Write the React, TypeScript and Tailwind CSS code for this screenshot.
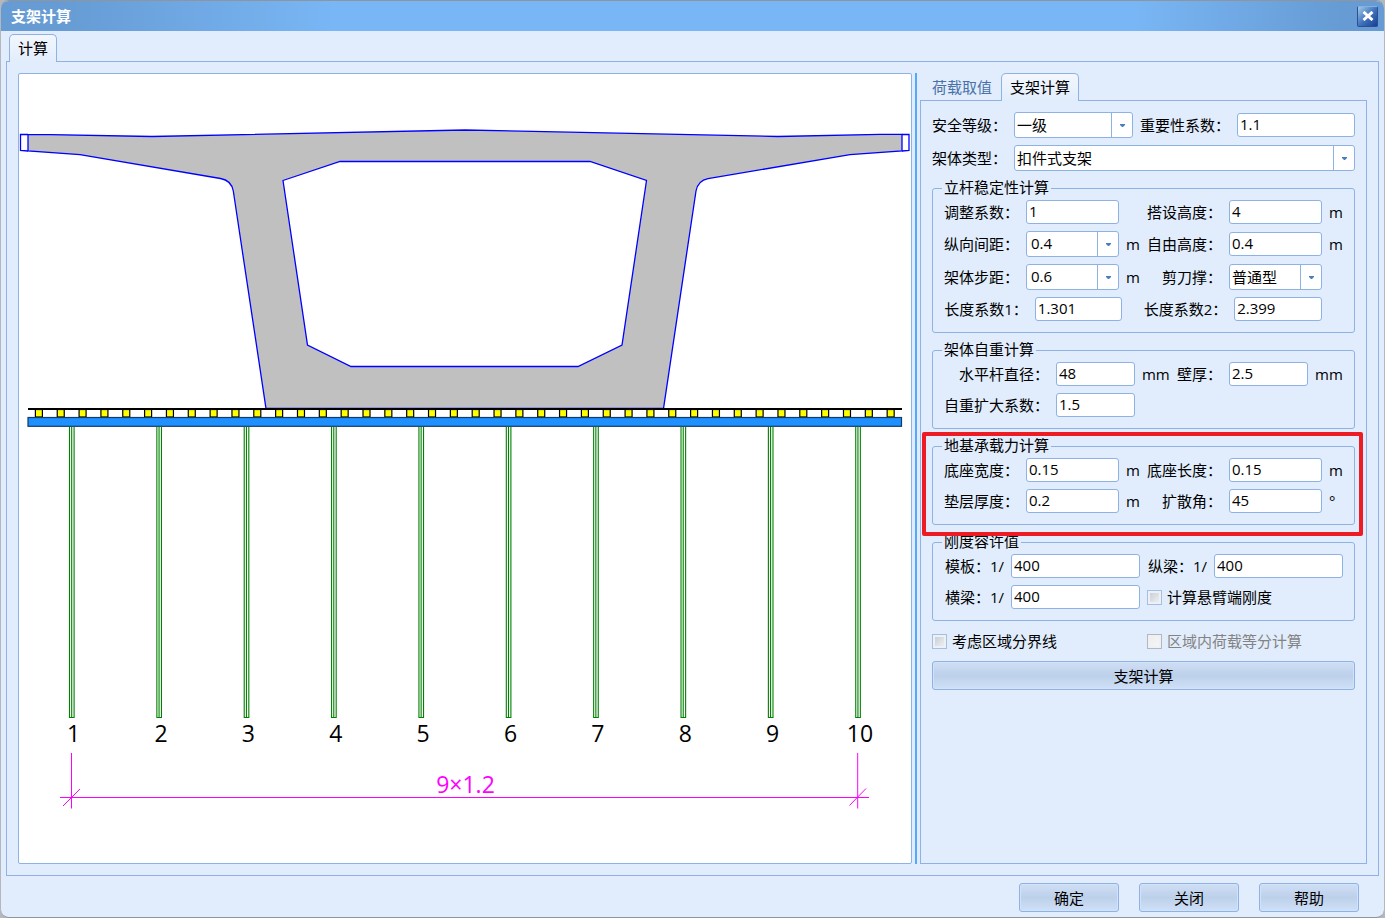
import React, { useId, useState } from "react";

const POSTS = Array.from({ length: 10 }, (_, i) => 71.7 + i * 87.36);
const BLOCKS = Array.from({ length: 40 }, (_, i) => 38.9 + i * 21.84);

function SectionDrawing() {
  return (
    <svg viewBox="19 74 892 789" className="block h-full w-full" role="img" aria-label="支架计算简图">
      <path
        d="M28 134.6 L50 134.6 L152 136.5 L465 130 L778 136.5 L880 134.4 L902 134.4 L902 151 L850 154.7 L708 178.6 Q698 180.5 696 191 L663.5 408.5 L266 408.5 L233.3 191 Q231.5 180.5 220.5 178.5 L80 154.7 L28 151 Z M283 180.5 L340 161.5 L590 161.5 L646.5 180.5 L622 345 L578 366.5 L351 366.5 L307.5 345 Z"
        fill="#c0c0c0"
        fillRule="evenodd"
        stroke="#0000ff"
        strokeWidth="1.3"
      />
      <path
        d="M28 134.5 L20.5 134.5 L20.5 150.5 L28 151 M902 134.5 L909 134.5 L909 150.5 L902 151"
        fill="none"
        stroke="#0000ff"
        strokeWidth="1.3"
      />
      {BLOCKS.map((x) => (
        <rect key={x} x={x - 3.5} y="409.5" width="7" height="7.5" fill="#ffff00" stroke="#000" strokeWidth="1.2" />
      ))}
      <path d="M28 409 H902" stroke="#000" strokeWidth="1.8" />
      <rect x="28" y="417.5" width="873.5" height="8.8" fill="#1e90ff" stroke="#123b66" strokeWidth="1.2" />
      {POSTS.map((x, i) => (
        <g key={x}>
          <path
            d={`M${x - 2.2} 427 V717.5 H${x + 2.4} V427 M${x} 427 V717`}
            fill="none"
            stroke="#008000"
            strokeWidth="1.1"
          />
          <text x={x + 2} y="742" fontSize="23" textAnchor="middle" fill="#000">
            {i + 1}
          </text>
        </g>
      ))}
      <path
        d="M60 797.5 H869 M71.5 753 V808.5 M857.7 753 V808.5 M63 806 L80 789 M849.5 805.5 L866 788.5"
        stroke="#ff00ff"
        strokeWidth="1"
      />
      <text x="465.5" y="793" fontSize="23" textAnchor="middle" fill="#ff00ff">
        9×1.2
      </text>
    </svg>
  );
}

type TextProps = { id: string; value: string };

function TextBox({ id, value }: TextProps) {
  return (
    <input
      id={id}
      type="text"
      defaultValue={value}
      className="h-6 w-full min-w-0 rounded-[3px] border border-[#8db2e3] bg-white pr-1 pb-[2px] pl-[2px] leading-5 outline-none"
    />
  );
}

type DropProps = { id: string; options: string[]; indent?: boolean };

function Drop({ id, options, indent }: DropProps) {
  return (
    <div className="relative h-[26px]">
      <select
        id={id}
        className={`h-full w-full appearance-none rounded-[3px] border border-[#8db2e3] bg-white pr-6 outline-none ${
          indent ? "pb-[2px] pl-1" : "pl-[2px]"
        }`}
      >
        {options.map((o) => (
          <option key={o}>{o}</option>
        ))}
      </select>
      <span className="pointer-events-none absolute inset-y-0 right-0 flex w-[22px] items-center justify-center border-l border-[#8db2e3]">
        <svg width="5" height="3" viewBox="0 0 5 3" aria-hidden="true">
          <path d="M0 0 H5 V1 L3 3 H2 L0 1 Z" fill="#4a7ebb" />
        </svg>
      </span>
    </div>
  );
}

function Label({ htmlFor, children }: { htmlFor: string; children: React.ReactNode }) {
  return (
    <label htmlFor={htmlFor} className="pr-[7px] text-right whitespace-nowrap">
      {children}
    </label>
  );
}

function Unit({ children }: { children?: React.ReactNode }) {
  return <span className="pl-[7px] whitespace-nowrap">{children}</span>;
}

function Check({ label, disabled }: { label: string; disabled?: boolean }) {
  const id = useId();
  return (
    <div className="flex items-center gap-[5px]">
      <input
        id={id}
        type="checkbox"
        disabled={disabled}
        className="size-[15px] shrink-0 appearance-none border border-[#a3bfe6] bg-linear-to-br from-[#c3c9d2] to-[#f4f5f7] shadow-[inset_0_0_0_2px_#edf0f4] checked:from-[#3f73b8] checked:to-[#6fa3e0] disabled:border-[#b4b7bb] disabled:from-[#ececec] disabled:to-[#f7f7f7]"
      />
      <label htmlFor={id} className={disabled ? "text-[#838383]" : ""}>
        {label}
      </label>
    </div>
  );
}

function Group({ title, children }: { title: string; children: React.ReactNode }) {
  return (
    <fieldset className="min-w-0 rounded-[3px] border border-[#8db2e3] px-[11px] pt-[2px] pb-[11px]">
      <legend className="-ml-[2px] px-[2px] pb-[2px] leading-[18px]">{title}</legend>
      <div className="flex flex-col gap-[7px]">{children}</div>
    </fieldset>
  );
}

const pairRow = "grid grid-cols-[82fr_93fr_28fr_82fr_93fr_21fr] items-center";
const factorRow = "grid grid-cols-[91fr_87fr_22fr_90fr_88fr_21fr] items-center";
const weightRow = "grid grid-cols-[112fr_79fr_42fr_52fr_79fr_35fr] items-center";
const ratioRow = "grid grid-cols-[67fr_129fr_7fr_67fr_129fr] items-center";
const pushButton =
  "rounded-[3px] border border-[#8db2e3] bg-linear-to-b from-[#cfdff5] via-[#bdd0ea] via-50% to-[#cfe1f7] shadow-[inset_0_0_0_1px_#d3e3f7] hover:brightness-105";

function SupportForm() {
  return (
    <div className="flex flex-col gap-[7px] px-[11px] pt-[11px]">
      <div className="grid grid-cols-[82fr_119fr_7fr_97fr_118fr] items-center">
        <Label htmlFor="safety">安全等级：</Label>
        <Drop id="safety" options={["一级", "二级", "三级"]} />
        <span />
        <Label htmlFor="importance">重要性系数：</Label>
        <TextBox id="importance" value="1.1" />
      </div>
      <div className="grid grid-cols-[82fr_341fr] items-center">
        <Label htmlFor="frame">架体类型：</Label>
        <Drop id="frame" options={["扣件式支架", "碗扣式支架", "盘扣式支架"]} />
      </div>

      <Group title="立杆稳定性计算">
        <div className={pairRow}>
          <Label htmlFor="adjust">调整系数：</Label>
          <TextBox id="adjust" value="1" />
          <Unit />
          <Label htmlFor="height">搭设高度：</Label>
          <TextBox id="height" value="4" />
          <Unit>m</Unit>
        </div>
        <div className={pairRow}>
          <Label htmlFor="spacing">纵向间距：</Label>
          <Drop id="spacing" options={["0.4", "0.6", "0.9"]} indent />
          <Unit>m</Unit>
          <Label htmlFor="free">自由高度：</Label>
          <TextBox id="free" value="0.4" />
          <Unit>m</Unit>
        </div>
        <div className={pairRow}>
          <Label htmlFor="step">架体步距：</Label>
          <Drop id="step" options={["0.6", "0.9", "1.2"]} indent />
          <Unit>m</Unit>
          <Label htmlFor="brace">剪刀撑：</Label>
          <Drop id="brace" options={["普通型", "加强型"]} />
          <Unit />
        </div>
        <div className={factorRow}>
          <Label htmlFor="k1">长度系数1：</Label>
          <TextBox id="k1" value="1.301" />
          <span />
          <Label htmlFor="k2">长度系数2：</Label>
          <TextBox id="k2" value="2.399" />
        </div>
      </Group>

      <Group title="架体自重计算">
        <div className={weightRow}>
          <Label htmlFor="diameter">水平杆直径：</Label>
          <TextBox id="diameter" value="48" />
          <Unit>mm</Unit>
          <Label htmlFor="wall">壁厚：</Label>
          <TextBox id="wall" value="2.5" />
          <Unit>mm</Unit>
        </div>
        <div className={weightRow}>
          <Label htmlFor="enlarge">自重扩大系数：</Label>
          <TextBox id="enlarge" value="1.5" />
        </div>
      </Group>

      <div className="relative">
        <Group title="地基承载力计算">
          <div className={pairRow}>
            <Label htmlFor="baseW">底座宽度：</Label>
            <TextBox id="baseW" value="0.15" />
            <Unit>m</Unit>
            <Label htmlFor="baseL">底座长度：</Label>
            <TextBox id="baseL" value="0.15" />
            <Unit>m</Unit>
          </div>
          <div className={pairRow}>
            <Label htmlFor="cushion">垫层厚度：</Label>
            <TextBox id="cushion" value="0.2" />
            <Unit>m</Unit>
            <Label htmlFor="angle">扩散角：</Label>
            <TextBox id="angle" value="45" />
            <Unit>°</Unit>
          </div>
        </Group>
        <div className="pointer-events-none absolute -top-1 -right-2 -bottom-[11px] -left-[10px] z-10 rounded-[2px] border-4 border-[#ed1c24]" />
      </div>

      <Group title="刚度容许值">
        <div className={ratioRow}>
          <Label htmlFor="panel">模板：1/</Label>
          <TextBox id="panel" value="400" />
          <span />
          <Label htmlFor="longBeam">纵梁：1/</Label>
          <TextBox id="longBeam" value="400" />
        </div>
        <div className={ratioRow}>
          <Label htmlFor="crossBeam">横梁：1/</Label>
          <TextBox id="crossBeam" value="400" />
          <span />
          <div className="col-span-2">
            <Check label="计算悬臂端刚度" />
          </div>
        </div>
      </Group>

      <div className="grid h-[26px] grid-cols-[215fr_208fr] items-center">
        <Check label="考虑区域分界线" />
        <Check label="区域内荷载等分计算" disabled />
      </div>
      <button type="button" className={`h-[29px] ${pushButton}`}>
        支架计算
      </button>
    </div>
  );
}

const activeTab =
  "relative z-10 -mb-px h-7 rounded-t-[5px] border border-b-0 border-[#8db2e3] bg-linear-to-b from-[#f3f7fd] to-[#e1edfc] px-2 pb-[2px] text-black";
const idleTab = "-mb-px h-7 border border-b-0 border-transparent px-2 pb-[2px] text-[#4a70a8]";

export default function App() {
  const [tab, setTab] = useState(1);
  return (
    <div className="flex min-h-screen bg-[#b4b8be] px-px font-['Open_Sans','Noto_Sans_CJK_SC',sans-serif] text-[15px] leading-5 text-black">
      <div className="flex min-w-0 flex-1 flex-col overflow-hidden rounded-[8px] border-y border-[#8f959d] bg-[#e1edfc]">
        <header className="flex h-[30px] items-center justify-between bg-[linear-gradient(90deg,#669bd3_4%,#79b6f5_24%,#79b6f5_82%,#669bd3_97%)] pr-[6px] pl-[10px]">
          <h1 className="font-bold text-white">支架计算</h1>
          <button
            type="button"
            aria-label="关闭窗口"
            className="flex size-[21px] items-center justify-center rounded-[2px] border border-[#2a4f9a] border-t-[#7fb3e0] bg-linear-to-br from-[#a5cbe6] via-[#4474bd] to-[#173f91]"
          >
            <svg width="12" height="10" viewBox="0 0 12 10" aria-hidden="true">
              <path d="M1.5 1 L10.5 9 M10.5 1 L1.5 9" stroke="#fff" strokeWidth="3" />
            </svg>
          </button>
        </header>

        <main className="flex flex-1 flex-col px-[5px] pt-[3px]">
          <div role="tablist" className="flex pl-[3px]">
            <button type="button" role="tab" aria-selected="true" className={activeTab}>
              计算
            </button>
          </div>
          <div className="grid flex-1 grid-cols-[minmax(0,1fr)_2px_450px] border border-[#8db2e3] p-[11px]">
            <section className="mr-[3px] flex rounded-[2px] border border-[#8db2e3] bg-white">
              <SectionDrawing />
            </section>
            <div className="bg-[#55a9fa]" />
            <section className="ml-[3px] flex flex-col">
              <div role="tablist" className="flex pl-[3px]">
                <button
                  type="button"
                  role="tab"
                  aria-selected={tab === 0}
                  onClick={() => setTab(0)}
                  className={tab === 0 ? activeTab : idleTab}
                >
                  荷载取值
                </button>
                <button
                  type="button"
                  role="tab"
                  aria-selected={tab === 1}
                  onClick={() => setTab(1)}
                  className={tab === 1 ? activeTab : idleTab}
                >
                  支架计算
                </button>
              </div>
              <div role="tabpanel" className="flex-1 border border-[#8db2e3]">
                <SupportForm />
              </div>
            </section>
          </div>
        </main>

        <footer className="flex justify-end gap-5 pt-[7px] pr-[25px] pb-[5px]">
          <button type="button" className={`h-[29px] w-[100px] ${pushButton}`}>
            确定
          </button>
          <button type="button" className={`h-[29px] w-[100px] ${pushButton}`}>
            关闭
          </button>
          <button type="button" className={`h-[29px] w-[100px] ${pushButton}`}>
            帮助
          </button>
        </footer>
      </div>
    </div>
  );
}
